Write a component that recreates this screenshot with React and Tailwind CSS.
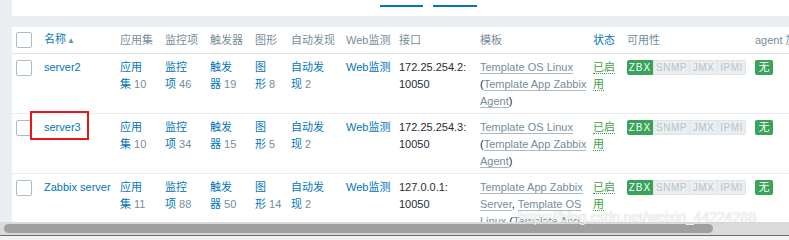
import React from 'react';

const link = 'text-[#0275b8]';
const grey = 'text-[#768d99]';

function Count({ a, b, n }) {
  return (
    <>
      <span className={link}>{a}</span>
      <br />
      <span className={link}>{b}</span> <span className={grey}>{n}</span>
    </>
  );
}

function Tpl({ children }) {
  return <span className="text-[#768d99] border-b border-[#acbbc2]">{children}</span>;
}

function Badges() {
  return (
    <div className="flex h-[15px] mt-[1px] text-[10px] leading-[13px] tracking-[0.5px]">
      <span className="w-[26px] flex items-center justify-center bg-[#3aa35a] border border-[#3aa35a] text-white tracking-[1px] rounded-l-[2px]">ZBX</span>
      <span className="w-[37px] flex items-center justify-center bg-[#ebeef0] border border-[#dfe4e7] text-[#b8c4ca]">SNMP</span>
      <span className="w-[28px] flex items-center justify-center bg-[#ebeef0] border border-l-0 border-[#dfe4e7] text-[#b8c4ca]">JMX</span>
      <span className="w-[28px] flex items-center justify-center bg-[#ebeef0] border border-l-0 border-[#dfe4e7] text-[#b8c4ca] rounded-r-[2px]">IPMI</span>
    </div>
  );
}

function Checkbox() {
  return <div className="w-[16px] h-[16px] border border-[#acbbc2] rounded-[2px] bg-white" />;
}

const rows = [
  {
    name: 'server2', app: '10', items: '46', trig: '19', graph: '8', disc: '2', ip: '172.25.254.2:',
    tpl: (
      <>
        <Tpl>Template OS Linux</Tpl>
        <br />(<Tpl>Template App Zabbix<br />Agent</Tpl>)
      </>
    ),
  },
  {
    name: 'server3', app: '10', items: '34', trig: '15', graph: '5', disc: '2', ip: '172.25.254.3:', mark: true,
    tpl: (
      <>
        <Tpl>Template OS Linux</Tpl>
        <br />(<Tpl>Template App Zabbix<br />Agent</Tpl>)
      </>
    ),
  },
  {
    name: 'Zabbix server', app: '11', items: '88', trig: '50', graph: '14', disc: '2', ip: '127.0.0.1:',
    tpl: (
      <>
        <Tpl>Template App Zabbix<br />Server</Tpl>, <Tpl>Template OS<br />Linux</Tpl> (<Tpl>Template App</Tpl>
      </>
    ),
  },
];

export default function App() {
  return (
    <div className="w-[789px] h-[240px] overflow-hidden bg-white relative font-['Liberation_Sans','Noto_Sans_CJK_SC',sans-serif] text-[11px] leading-[17px] text-[#1f2c33]">
      <div className="flex h-[222px]">
        <div className="w-[12px] shrink-0 bg-[#ebeef0]" />
        <div className="flex-1 min-w-0 overflow-hidden">
          <div className="h-[16px] flex items-start gap-[10px] pl-[368px] pt-[5px]">
            <div className="w-[43px] h-[2px] bg-[#0275b8]" />
            <div className="w-[44px] h-[2px] bg-[#0275b8]" />
          </div>
          <div className="h-[11px] bg-[#ebeef0]" />

          <div className="flex items-center h-[27px] border-b border-[#dfe4e7] text-[#768d99] whitespace-nowrap">
            <div className="w-[32px] shrink-0 pl-[4px]"><Checkbox /></div>
            <div className="w-[76px] shrink-0 text-[#0275b8]">名称<span className="text-[8px] text-[#768d99] ml-[1px]">▲</span></div>
            <div className="w-[45px] shrink-0">应用集</div>
            <div className="w-[45px] shrink-0">监控项</div>
            <div className="w-[45px] shrink-0">触发器</div>
            <div className="w-[36px] shrink-0">图形</div>
            <div className="w-[55px] shrink-0">自动发现</div>
            <div className="w-[53px] shrink-0">Web监测</div>
            <div className="w-[81px] shrink-0">接口</div>
            <div className="w-[113px] shrink-0">模板</div>
            <div className="w-[34px] shrink-0 text-[#0275b8]">状态</div>
            <div className="w-[128px] shrink-0">可用性</div>
            <div className="shrink-0">agent 加密</div>
          </div>

          {rows.map((r) => (
            <div key={r.name} className="flex h-[60px] pt-[5px] border-b border-[#ebeef0] whitespace-nowrap">
              <div className="w-[32px] shrink-0 pl-[4px] pt-[1px]"><Checkbox /></div>
              <div className="w-[76px] shrink-0 relative">
                <span className={link}>{r.name}</span>
                {r.mark && (
                  <div className="absolute left-[-14px] top-[-8px] w-[59px] h-[29px] border-2 border-[#e8151b]" />
                )}
              </div>
              <div className="w-[45px] shrink-0"><Count a="应用" b="集" n={r.app} /></div>
              <div className="w-[45px] shrink-0"><Count a="监控" b="项" n={r.items} /></div>
              <div className="w-[45px] shrink-0"><Count a="触发" b="器" n={r.trig} /></div>
              <div className="w-[36px] shrink-0"><Count a="图" b="形" n={r.graph} /></div>
              <div className="w-[55px] shrink-0"><Count a="自动发" b="现" n={r.disc} /></div>
              <div className="w-[53px] shrink-0"><span className={link}>Web监测</span></div>
              <div className="w-[81px] shrink-0">{r.ip}<br />10050</div>
              <div className="w-[113px] shrink-0">{r.tpl}</div>
              <div className="w-[34px] shrink-0">
                <span className="text-[#429e47] border-b border-dotted border-[#429e47]">已启<br />用</span>
              </div>
              <div className="w-[128px] shrink-0"><Badges /></div>
              <div className="shrink-0">
                <span className="inline-flex w-[18px] h-[15px] mt-[1px] items-center justify-center bg-[#3aa35a] text-white rounded-[2px]">无</span>
              </div>
            </div>
          ))}
        </div>
      </div>

      <div className="h-[13px] bg-[#dadada] flex items-center pl-[4px]">
        <div className="w-[709px] h-[9px] rounded-full bg-[#a0a0a0]" />
      </div>
      <div className="h-[1px] bg-[#6e6e6e]" />
      <div className="h-[4px] bg-[#f2f2f2]" />

      <div className="absolute left-[518px] top-[209px] text-[14px] leading-[16px] text-white/90 font-['Liberation_Sans',sans-serif] [text-shadow:0_0_1px_rgba(0,0,0,0.3)]">
        https://blog.csdn.net/weixin_44224288
      </div>
    </div>
  );
}
